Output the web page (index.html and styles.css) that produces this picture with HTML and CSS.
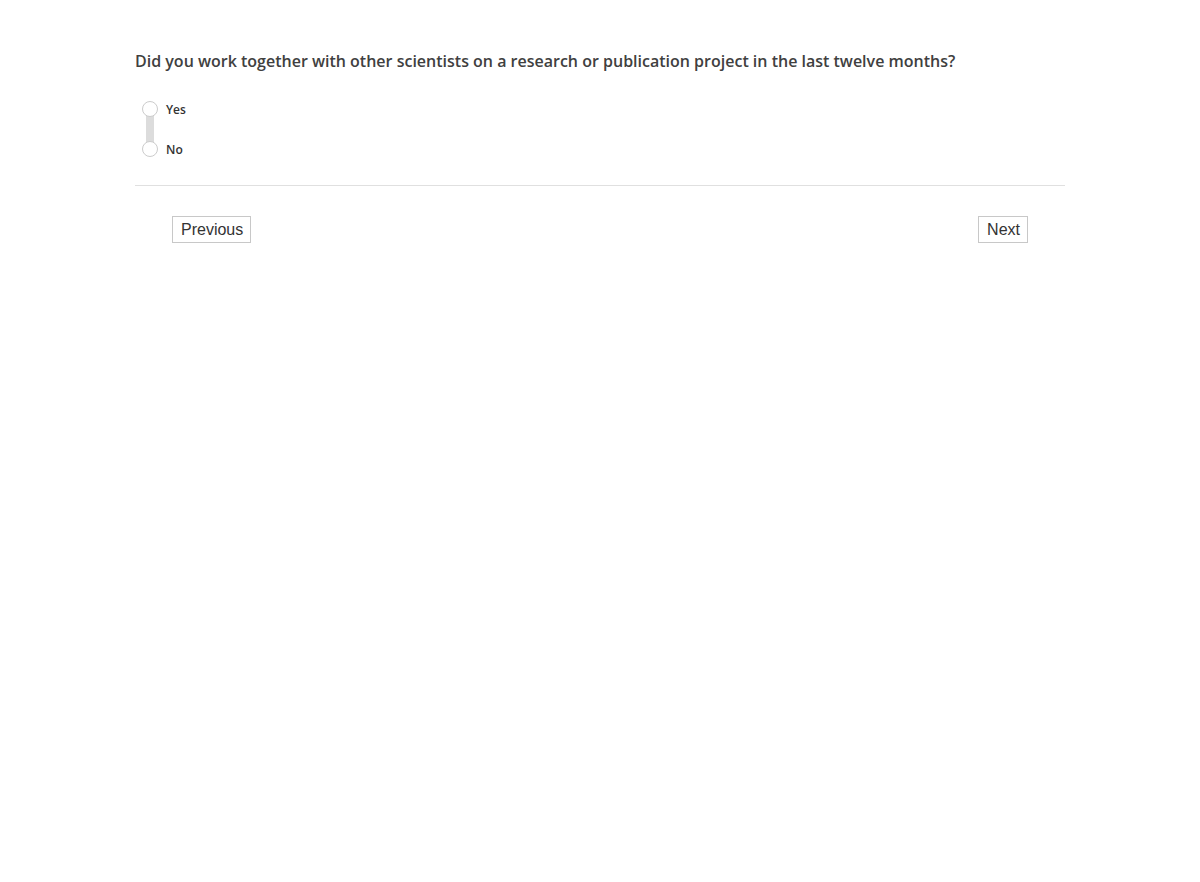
FILE: index.html
```html
<!DOCTYPE html>
<html lang="en">
  <head>
    <meta charset="UTF-8" />
    <title>Survey</title>
    <link rel="stylesheet" href="styles.css">
  </head>
  <body>
    <div class="container">
      <div class="question">
        <h3 class="question-title">
          Did you work together with other scientists on a research or publication project in the last twelve months?
        </h3>
        <div class="choices">
          <div class="choice-track"></div>
          <label class="choice">
            <span class="radio"></span>
            <span class="choice-label">Yes</span>
          </label>
          <label class="choice">
            <span class="radio"></span>
            <span class="choice-label">No</span>
          </label>
        </div>
      </div>
      <div class="nav">
        <button class="nav-btn">Previous</button>
        <button class="nav-btn">Next</button>
      </div>
    </div>
  </body>
</html>
```

FILE: styles.css
```css
body {
  margin: 0;
  padding: 0;
  background-color: #fff;
  font-family: "Open Sans", sans-serif;
}
.container {
  width: 930px;
  margin: 0 auto;
  padding-top: 49px;
}
.question {
  border-bottom: 1px solid #e0e0e0;
  padding-bottom: 28px;
}
.question-title {
  margin: 0;
  font-size: 16px;
  font-weight: 600;
  line-height: 24px;
  color: #404040;
}
.choices {
  position: relative;
  margin-top: 28px;
  padding-left: 7px;
}
.choice-track {
  position: absolute;
  left: 11px;
  top: 12px;
  width: 8px;
  height: 32px;
  background-color: #dcdcdc;
}
.choice {
  position: relative;
  display: flex;
  align-items: center;
  height: 16px;
  margin-bottom: 24px;
}
.choice:last-child {
  margin-bottom: 0;
}
.radio {
  width: 14px;
  height: 14px;
  border: 1px solid #ccc;
  border-radius: 50%;
  background-color: #fff;
}
.choice-label {
  margin-left: 8px;
  font-size: 12px;
  font-weight: 600;
  color: #333;
}
.nav {
  display: flex;
  justify-content: space-between;
  padding: 30px 37px 0;
}
.nav-btn {
  font-family: "Liberation Sans", Arial, sans-serif;
  font-size: 16px;
  color: #333;
  background-color: #fff;
  border: 1px solid #c8c8c8;
  padding: 3px 7px 3px 8px;
  height: 27px;
  line-height: 19px;
  cursor: pointer;
}
```
